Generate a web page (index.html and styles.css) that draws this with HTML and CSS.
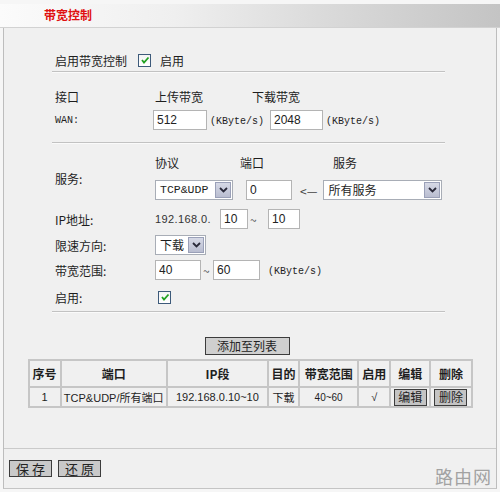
FILE: index.html
```html
<!DOCTYPE html>
<html lang="zh-CN">
<head>
    <meta charset="UTF-8">
    <title>带宽控制</title>
    <link rel="stylesheet" href="styles.css">
</head>
<body>
    <div class="titlebar"><span class="title">带宽控制</span></div>

    <div class="panel">
        <div class="form">
            <div class="row r-enable">
                <span class="enable-label">启用带宽控制</span>
                <span class="check"><svg width="10" height="10" viewBox="0 0 10 10"><path d="M2 5 L4 7.5 L8.5 2.5" fill="none" stroke="#21a121" stroke-width="1.8"/></svg></span>
                <span>启用</span>
            </div>
            <div class="rule"></div>

            <div class="row r-head1">
                <span class="lbl">接口</span>
                <span class="up-col">上传带宽</span>
                <span>下载带宽</span>
            </div>
            <div class="row r-wan">
                <span class="lbl wan mono">WAN:</span>
                <input class="field w54" value="512">
                <span class="unit mono">(KByte/s)</span>
                <input class="field w53" value="2048">
                <span class="unit mono">(KByte/s)</span>
            </div>
            <div class="rule r-rule2"></div>

            <div class="service">
                <span class="lbl svc-label">服务:</span>
                <div class="row r-head2">
                    <span class="h-proto">协议</span>
                    <span class="h-port">端口</span>
                    <span>服务</span>
                </div>
                <div class="row r-svc">
                    <div class="select w78"><span class="sel-text sel-mono">TCP&amp;UDP</span><span class="arrow"><svg width="9" height="6" viewBox="0 0 9 6"><path d="M1 1 L4.5 4.5 L8 1" fill="none" stroke="#2a2a3a" stroke-width="1.8"/></svg></span></div>
                    <input class="field w46 port" value="0">
                    <span class="back">&lt;—</span>
                    <div class="select w119"><span class="sel-text">所有服务</span><span class="arrow"><svg width="9" height="6" viewBox="0 0 9 6"><path d="M1 1 L4.5 4.5 L8 1" fill="none" stroke="#2a2a3a" stroke-width="1.8"/></svg></span></div>
                </div>
            </div>

            <div class="row r-ip">
                <span class="lbl">IP地址:</span>
                <span class="ip-prefix">192.168.0.</span>
                <input class="field w28" value="10">
                <span class="tilde">~</span>
                <input class="field w32" value="10">
            </div>
            <div class="row r-dir">
                <span class="lbl">限速方向:</span>
                <div class="select w51"><span class="sel-text">下载</span><span class="arrow"><svg width="9" height="6" viewBox="0 0 9 6"><path d="M1 1 L4.5 4.5 L8 1" fill="none" stroke="#2a2a3a" stroke-width="1.8"/></svg></span></div>
            </div>
            <div class="row r-range">
                <span class="lbl">带宽范围:</span>
                <input class="field w46" value="40">
                <span class="tilde t2">~</span>
                <input class="field w47" value="60">
                <span class="unit mono u3">(KByte/s)</span>
            </div>
            <div class="row r-on">
                <span class="lbl">启用:</span>
                <span class="check small-check"><svg width="10" height="10" viewBox="0 0 10 10"><path d="M2 5 L4 7.5 L8.5 2.5" fill="none" stroke="#21a121" stroke-width="1.8"/></svg></span>
            </div>
            <div class="rule r-rule3"></div>
        </div>

        <div class="add-row"><button class="btn add-btn">添加至列表</button></div>

        <table class="list">
            <colgroup>
                <col style="width:32px"><col style="width:106px"><col style="width:101px"><col style="width:31px">
                <col style="width:59px"><col style="width:32px"><col style="width:40px"><col style="width:41px">
            </colgroup>
            <tr class="head">
                <th>序号</th><th>端口</th><th>IP段</th><th>目的</th><th>带宽范围</th><th>启用</th><th>编辑</th><th>删除</th>
            </tr>
            <tr class="data">
                <td>1</td>
                <td>TCP&amp;UDP/所有端口</td>
                <td>192.168.0.10~10</td>
                <td>下载</td>
                <td class="small">40~60</td>
                <td>√</td>
                <td><button class="btn cell-btn">编辑</button></td>
                <td><button class="btn cell-btn">删除</button></td>
            </tr>
        </table>

        <div class="footer">
            <button class="btn foot-btn">保 存</button>
            <button class="btn foot-btn">还 原</button>
            <span class="mark">路由网</span>
        </div>
    </div>
</body>
</html>
```

FILE: styles.css
```css
body {
    margin: 0;
    background: #f6f6f6;
    font-family: "Noto Sans CJK SC", sans-serif;
    font-size: 12px;
    color: #1e1e1e;
}
.titlebar {
    margin-top: 4px;
    height: 23px;
    background: linear-gradient(to right, #fbfbfb 0%, #efefef 35%, #dadada 65%, #c4c4c4 100%);
    border-bottom: 1px solid #d2d2d2;
}
.title {
    display: inline-block;
    margin-left: 44px;
    line-height: 22px;
    color: #e01010;
    font-weight: bold;
    font-size: 12px;
}
.panel {
    margin: 0 3px;
    height: 461px;
    box-sizing: border-box;
    border-left: 1px solid #bdbdbd;
    border-right: 1px solid #bdbdbd;
    border-bottom: 1px solid #c4c4c4;
    background: #f0f0f0;
    display: flex;
    flex-direction: column;
}
.form {
    width: 393px;
    margin-left: 48px;
}
.row {
    display: flex;
    align-items: center;
    height: 20px;
    white-space: nowrap;
}
.lbl {
    width: 100px;
    padding-left: 3px;
    flex-shrink: 0;
}
.mono {
    font-family: "Liberation Mono", "Noto Sans CJK SC", monospace;
    font-size: 10px;
}
.rule {
    height: 0;
    border-top: 1px solid #c2c2c2;
    border-bottom: 1px solid #fafafa;
}

.r-enable { margin-top: 23px; height: 18px; }
.r-enable + .rule { margin-top: 2px; }
.enable-label { padding-left: 3px; width: 83px; }
.check {
    width: 11px;
    height: 11px;
    border: 1px solid #3d5a7a;
    background: linear-gradient(#f4f4f4, #ffffff);
    display: inline-flex;
    align-items: center;
    justify-content: center;
    margin-right: 9px;
}

.r-head1 { margin-top: 14px; height: 18px; }
.up-col { width: 97px; }
.r-wan { margin-top: 5px; }
.wan { width: 98px; }

.field {
    box-sizing: border-box;
    height: 20px;
    padding: 0 3px;
    border: 1px solid #b4b4b4;
    background: #fff;
    font-family: "Liberation Sans", sans-serif;
    font-size: 12px;
    color: #222;
    margin: 0;
}
.w28 { width: 28px; }
.w32 { width: 32px; }
.w46 { width: 46px; }
.w47 { width: 47px; }
.w53 { width: 53px; }
.w54 { width: 54px; }
.unit { margin: 0 6px 0 3px; padding-top: 3px; }
.unit:last-child { margin-right: 0; }

.r-rule2 { margin-top: 12px; }

.service {
    display: grid;
    grid-template-columns: 103px auto;
    margin-top: 9px;
}
.svc-label {
    grid-row: 1 / span 2;
    align-self: center;
    padding-top: 4px;
}
.r-head2 { height: 18px; }
.h-proto { width: 85px; }
.h-port { width: 93px; }
.r-svc { margin-top: 9px; }

.select {
    box-sizing: border-box;
    height: 20px;
    border: 1px solid #a8adb6;
    background: #fff;
    display: flex;
    align-items: stretch;
}
.sel-text {
    flex: 1;
    padding-left: 4px;
    line-height: 18px;
}
.sel-mono {
    font-family: "Liberation Mono", monospace;
    font-size: 11.5px;
}
.arrow {
    width: 16px;
    margin: 1px;
    background: linear-gradient(#d6d9e6, #b9bdd0);
    border: 1px solid #9aa0b8;
    box-sizing: border-box;
    display: flex;
    align-items: center;
    justify-content: center;
}
.w51 { width: 51px; }
.w78 { width: 78px; }
.w119 { width: 119px; }
.port { margin-left: 13px; }
.back { margin: 0 6px 0 8px; color: #444; font-size: 12px; }

.r-ip { margin-top: 9px; }
.ip-prefix {
    width: 65px;
    font-family: "Liberation Sans", sans-serif;
    font-size: 11px;
    letter-spacing: 0.4px;
    color: #333;
}
.tilde { width: 18px; padding-left: 2px; color: #555; }
.t2 { width: 10px; }
.r-dir { margin-top: 6px; }
.r-range { margin-top: 5px; }
.u3 { margin-left: 8px; }
.r-on { margin-top: 8px; height: 18px; }
.small-check { margin-left: 3px; }
.r-rule3 { margin-top: 5px; }

.btn {
    font-family: "Noto Sans CJK SC", sans-serif;
    font-size: 12px;
    color: #222;
    background: #cfcfcf;
    border: 1px solid #3c3c3c;
    padding: 0;
    line-height: 14px;
}
.add-row {
    display: flex;
    justify-content: center;
    margin-top: 24px;
}
.add-btn {
    width: 85px;
    height: 18px;
    margin-left: -6px;
}

.list {
    margin: 4px auto 0;
    width: 445px;
    table-layout: fixed;
    border-collapse: collapse;
    border: 1px solid #a9a9a9;
}
.list th, .list td {
    border: 2px solid #c6c6c6;
    text-align: center;
    padding: 0;
    white-space: nowrap;
    overflow: hidden;
}
.list th {
    height: 25px;
    font-weight: bold;
    font-size: 12px;
}
.list td {
    height: 18px;
    font-size: 11px;
    font-family: "Liberation Sans", "Noto Sans CJK SC", sans-serif;
}
.list td.small { font-size: 10px; }
.cell-btn {
    width: 33px;
    height: 17px;
    background: #c4c4c4;
}

.footer {
    margin-top: auto;
    height: 39px;
    border-top: 1px solid #cacaca;
    display: flex;
    align-items: flex-start;
    padding-left: 5px;
    padding-right: 4px;
}
.foot-btn {
    width: 43px;
    height: 17px;
    margin-top: 11px;
    margin-right: 6px;
    font-size: 13px;
    background: #c9c9c9;
}
.mark {
    margin-left: auto;
    align-self: flex-end;
    font-size: 18px;
    line-height: 24px;
    color: #a2a2a2;
    letter-spacing: 1px;
}
```
